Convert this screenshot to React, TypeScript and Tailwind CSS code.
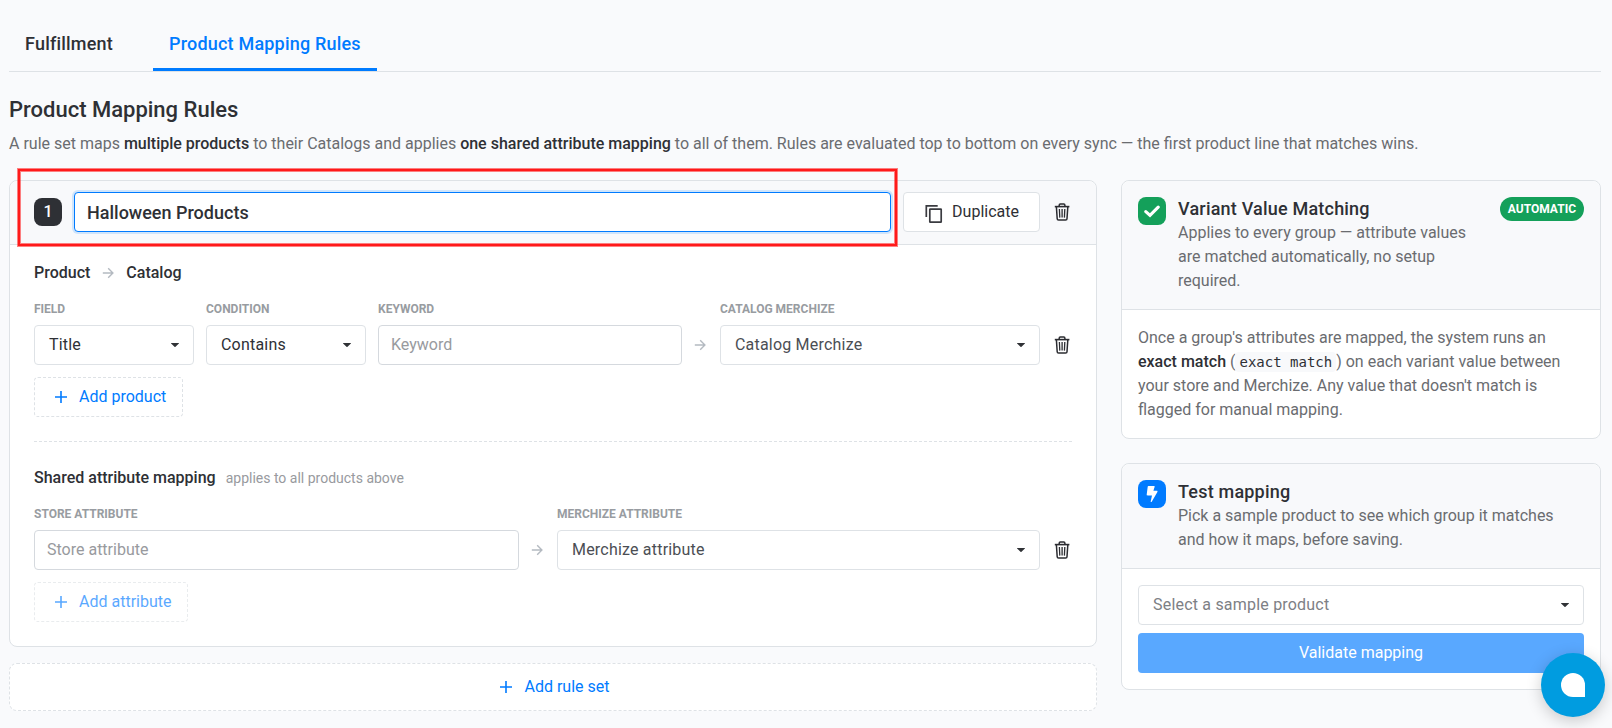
import { useState, type ReactNode } from "react";
import { clsx } from "clsx";

const tabs = ["Fulfillment", "Product Mapping Rules"];

function ArrowIcon() {
  return (
    <svg viewBox="0 0 12 12" className="h-3 w-3 shrink-0" fill="none" stroke="#b4bac1" strokeWidth="1.4">
      <path d="M.8 6h10M6.2 1.3 10.9 6l-4.7 4.7" />
    </svg>
  );
}

function PlusIcon() {
  return (
    <svg viewBox="0 0 20 20" className="h-5 w-5 shrink-0" fill="none" stroke="currentColor" strokeWidth="1.6">
      <path d="M10 4v12M4 10h12" />
    </svg>
  );
}

function CaretIcon() {
  return (
    <svg viewBox="0 0 8 4" className="h-1 w-2 shrink-0" fill="#303236">
      <path d="M.3 0h7.4c.3 0 .4.3.2.5L4.5 3.8a.7.7 0 0 1-1 0L.1.5C-.1.3 0 0 .3 0Z" />
    </svg>
  );
}

function TrashIcon() {
  return (
    <svg viewBox="0 0 20 20" className="h-5 w-5 shrink-0" fill="none" stroke="#2b2c31">
      <path d="M2.8 4.6h14.6" strokeWidth="1.6" />
      <path d="M7.2 4.6V3.2c0-.7.4-1.1 1.1-1.1h3.5c.7 0 1.1.4 1.1 1.1v1.4" strokeWidth="1.5" />
      <path d="m4.4 5 .8 11.7c0 .9.6 1.4 1.4 1.4h7c.8 0 1.4-.5 1.4-1.4L15.8 5" strokeWidth="1.5" />
      <path d="m7.4 7 .4 8.6M10.1 7v8.6M12.8 7l-.4 8.6" strokeWidth="1.3" />
    </svg>
  );
}

function CopyIcon() {
  return (
    <svg viewBox="0 0 20 20" className="h-5 w-5 shrink-0 overflow-visible" fill="none" stroke="#3a3b40" strokeWidth="1.7">
      <path d="M2.3 15V3.8h11.4" />
      <rect x="5.8" y="7.2" width="11.4" height="13" rx=".4" />
    </svg>
  );
}

function Label({ children }: { children: ReactNode }) {
  return <div className="mb-2 h-4 text-xs leading-4 font-bold text-[#989ca1] uppercase">{children}</div>;
}

function Select({ value, className }: { value: string; className?: string }) {
  return (
    <button
      className={clsx(
        "flex h-10 w-full items-center justify-between rounded border border-[#dee2e6] bg-white px-3.5 text-left tracking-[0.2px]",
        className ?? "text-[#2e3035]"
      )}
    >
      {value}
      <CaretIcon />
    </button>
  );
}

function TextInput({ placeholder }: { placeholder: string }) {
  return (
    <input
      placeholder={placeholder}
      className="block h-10 w-full rounded border border-[#d5d9de] bg-white px-3 pb-0.5 outline-none placeholder:text-[#989a9e]"
    />
  );
}

function AddButton({ label, disabled }: { label: string; disabled?: boolean }) {
  return (
    <button
      disabled={disabled}
      className={clsx(
        "mt-3 flex h-10 items-center gap-2 rounded border border-dashed border-[#dee2e6] px-4 text-[#007bff]",
        disabled && "opacity-65"
      )}
    >
      <PlusIcon />
      {label}
    </button>
  );
}

function RuleSet() {
  const [name, setName] = useState("Halloween Products");

  return (
    <section className="relative rounded-lg border border-[#dee2e6] bg-white">
      <header className="flex items-center gap-3 rounded-t-lg border-b border-[#dee2e6] bg-[#f8f9fb] px-6 pt-[11px] pb-3">
        <span className="flex h-7 w-7 items-center justify-center rounded-lg bg-[#2e3035] pb-px font-medium text-white">
          1
        </span>
        <input
          value={name}
          onChange={(e) => setName(e.target.value)}
          className="h-10 min-w-0 flex-1 rounded border border-[#007bff] bg-white px-3 text-lg font-medium text-[#2e3035] shadow-[0_0_0_2px_rgba(0,123,255,0.16)] outline-none"
        />
        <button className="flex h-10 items-center gap-2 rounded border border-[#dee2e6] bg-white px-5 text-[#2e3035]">
          <CopyIcon />
          Duplicate
        </button>
        <TrashIcon />
      </header>

      <div className="px-6 pt-4 pb-6">
        <div className="flex items-center gap-3 font-medium">
          <span>Product</span>
          <ArrowIcon />
          <span>Catalog</span>
        </div>
        <div className="mt-4 flex items-end gap-3">
          <div className="w-40">
            <Label>Field</Label>
            <Select value="Title" />
          </div>
          <div className="w-40">
            <Label>Condition</Label>
            <Select value="Contains" />
          </div>
          <div className="flex-1">
            <Label>Keyword</Label>
            <TextInput placeholder="Keyword" />
          </div>
          <div className="flex h-10 w-3.5 items-center">
            <ArrowIcon />
          </div>
          <div className="w-80">
            <Label>Catalog Merchize</Label>
            <Select value="Catalog Merchize" className="text-[#4b4e54]" />
          </div>
          <div className="flex h-10 items-center">
            <TrashIcon />
          </div>
        </div>
        <AddButton label="Add product" />

        <div className="mt-6 border-t border-dashed border-[#dee2e6] pt-6">
          <div className="flex items-baseline gap-2.5">
            <span className="font-medium">Shared attribute mapping</span>
            <span className="text-sm leading-6 text-[#989a9e]">applies to all products above</span>
          </div>
          <div className="mt-4 flex items-end gap-3">
            <div className="w-[485px]">
              <Label>Store attribute</Label>
              <TextInput placeholder="Store attribute" />
            </div>
            <div className="flex h-10 w-3.5 items-center">
              <ArrowIcon />
            </div>
            <div className="flex-1">
              <Label>Merchize attribute</Label>
              <Select value="Merchize attribute" className="text-[#4b4e54]" />
            </div>
            <div className="flex h-10 items-center">
              <TrashIcon />
            </div>
          </div>
          <AddButton label="Add attribute" disabled />
        </div>
      </div>

      {/* highlight frame over the rule set name */}
      <div className="pointer-events-none absolute -top-3 left-2 h-[77px] w-[879px] border-2 border-[#ff1a1a] shadow-[0_0_0_1px_rgba(255,26,26,0.55),inset_0_0_0_1px_rgba(255,26,26,0.55)]" />
    </section>
  );
}

function InfoCard({
  icon,
  title,
  text,
  badge,
  children,
}: {
  icon: ReactNode;
  title: string;
  text: string;
  badge?: string;
  children: ReactNode;
}) {
  return (
    <section className="rounded-lg border border-[#dee2e6] bg-white">
      <header className="flex items-start gap-3 rounded-t-lg border-b border-[#dee2e6] bg-[#f8f9fb] p-4">
        {icon}
        <div className="flex-1">
          <h2 className="text-lg leading-6 font-medium tracking-[0.2px]">{title}</h2>
          <p className="text-[#6a6c70]">{text}</p>
        </div>
        {badge && (
          <span className="ml-3 flex h-6 items-center rounded-full bg-[#14a05a] px-2 text-xs font-bold text-white uppercase">
            {badge}
          </span>
        )}
      </header>
      <div className="p-4">{children}</div>
    </section>
  );
}

export default function App() {
  const [active, setActive] = useState(tabs[1]);

  return (
    <div className="min-h-screen bg-[#f9fafc] pt-4 pr-[11px] pl-[9px] font-[Roboto,sans-serif] text-base leading-6 text-[#2e3035]">
      <nav className="flex gap-6 border-b border-[#dee2e6]">
        {tabs.map((tab) => (
          <button
            key={tab}
            onClick={() => setActive(tab)}
            className={clsx(
              "h-[55px] border-b-[3px] px-4 pt-1 text-lg font-medium tracking-[0.2px]",
              tab === active ? "border-[#007bff] text-[#007bff]" : "border-transparent"
            )}
          >
            {tab}
          </button>
        ))}
      </nav>

      <h1 className="mt-[22px] text-[22px] leading-8 font-medium">Product Mapping Rules</h1>
      <p className="mt-1.5 text-[#6a6c70]">
        A rule set maps <b className="font-medium text-[#2e3035]">multiple products</b> to their Catalogs and applies{" "}
        <b className="font-medium text-[#2e3035]">one shared attribute mapping</b> to all of them. Rules are evaluated
        top to bottom on every sync — the first product line that matches wins.
      </p>

      <div className="mt-6 flex items-start gap-6">
        <div className="flex-1">
          <RuleSet />
          <button className="mt-4 flex h-12 w-full items-center justify-center gap-2 rounded-lg border border-dashed border-[#dee2e6] bg-white text-[#007bff]">
            <PlusIcon />
            Add rule set
          </button>
        </div>

        <aside className="flex w-[480px] flex-col gap-6">
          <InfoCard
            title="Variant Value Matching"
            text="Applies to every group — attribute values are matched automatically, no setup required."
            badge="Automatic"
            icon={
              <span className="flex h-7 w-7 items-center justify-center rounded-lg bg-[#14a05a]">
                <svg viewBox="0 0 16 16" className="h-4 w-4" fill="none" stroke="#fff" strokeWidth="3.1">
                  <path d="m1.8 8.6 4.2 3.8 8.2-8.2" strokeLinecap="round" />
                </svg>
              </span>
            }
          >
            <p className="text-[#6a6c70]">
              Once a group's attributes are mapped, the system runs an{" "}
              <b className="font-medium text-[#2e3035]">exact match</b> (
              <code className="rounded bg-[#f8f9fb] px-1 py-0.5 font-['DejaVu_Sans_Mono',monospace] text-sm text-[#2e3035]">
                exact match
              </code>
              ) on each variant value between your store and Merchize. Any value that doesn't match is flagged for
              manual mapping.
            </p>
          </InfoCard>

          <InfoCard
            title="Test mapping"
            text="Pick a sample product to see which group it matches and how it maps, before saving."
            icon={
              <span className="flex h-7 w-7 items-center justify-center rounded-lg bg-[#007bff]">
                <svg viewBox="0 0 12 18" className="h-[18px] w-3" fill="#fff">
                  <path d="M2.4 1h5.6c.5 0 .8.4.6.9L7.4 5.8h3.4c.6 0 .9.6.6 1.1L5.7 16.8c-.3.6-1.2.3-1-.4l1.3-5.9H1.5c-.5 0-.9-.4-.8-.9l1-7.9c0-.4.3-.7.7-.7Z" />
                </svg>
              </span>
            }
          >
            <Select value="Select a sample product" className="text-[#7d8085]" />
            <button className="mt-2 h-10 w-full rounded bg-[#59a8ff] text-white">Validate mapping</button>
          </InfoCard>
        </aside>
      </div>

      <button
        aria-label="Open chat"
        className="fixed right-[7px] bottom-[11px] flex h-16 w-16 items-center justify-center rounded-full bg-[#009ce0] shadow-[0_4px_16px_rgba(0,0,0,0.2)]"
      >
        <span className="h-6 w-6 rounded-full rounded-br-none bg-white" />
      </button>
    </div>
  );
}
